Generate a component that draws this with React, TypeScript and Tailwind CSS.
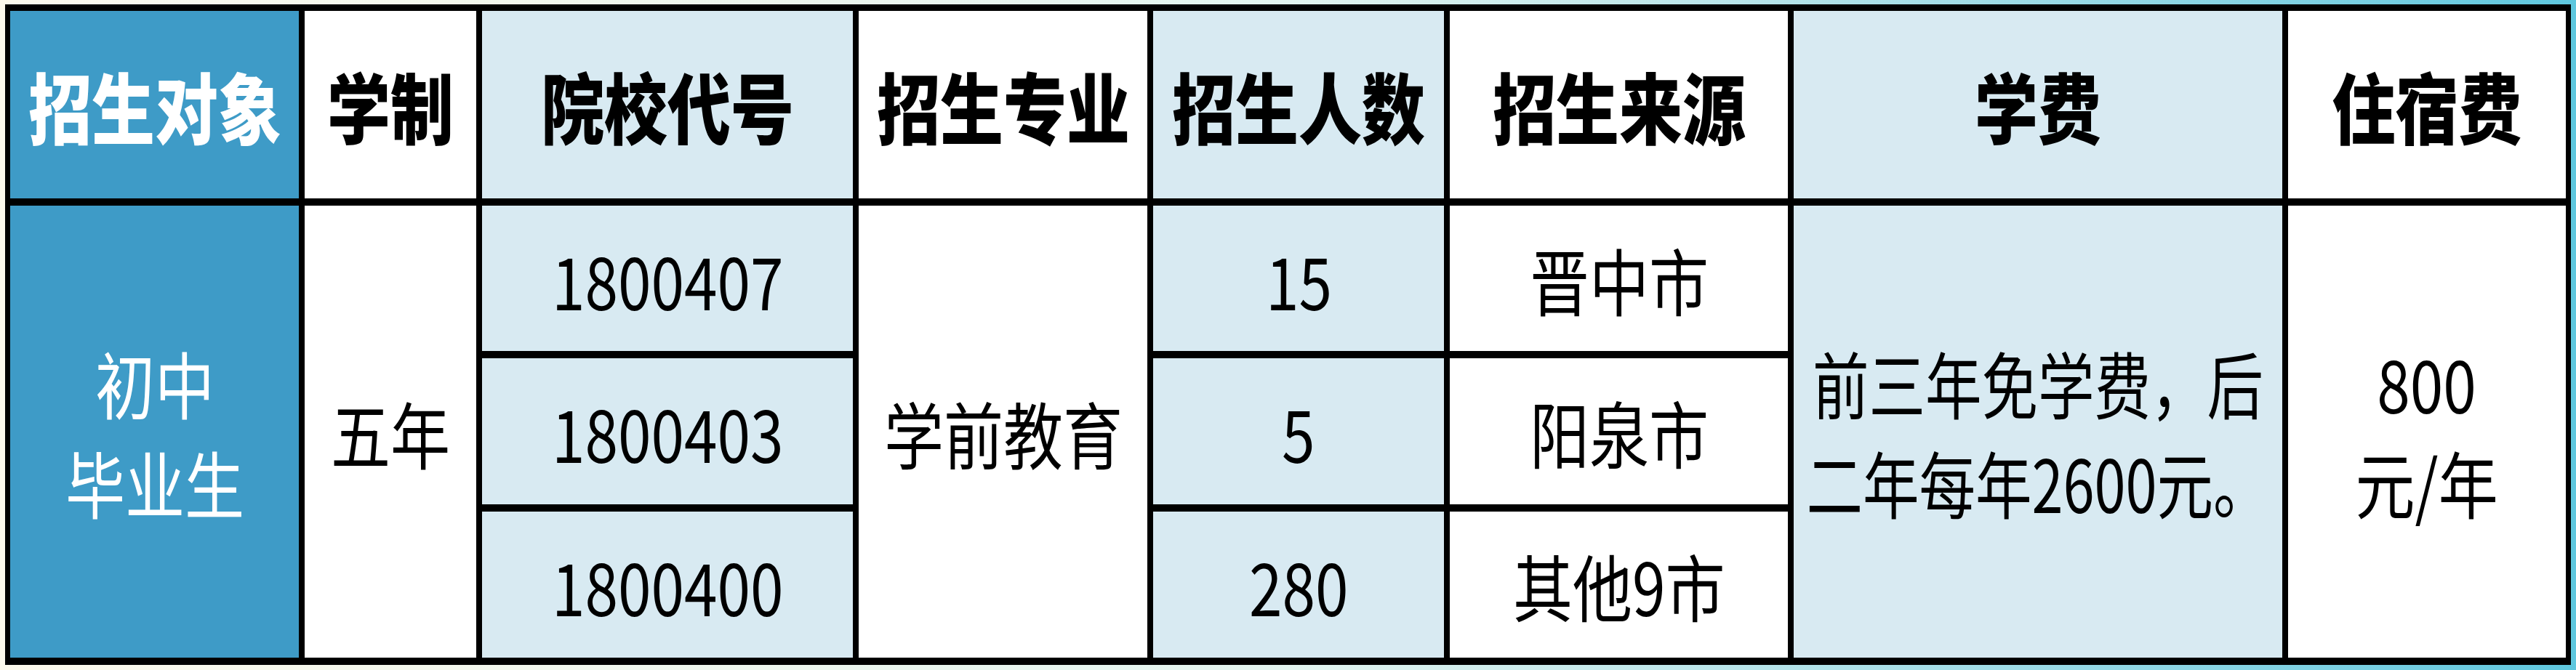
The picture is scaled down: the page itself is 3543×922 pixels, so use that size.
import React from 'react';

const font = "font-['Noto_Sans_CJK_SC','Noto_Sans',sans-serif]";

const BLUE = 'bg-[#3e9bc7] text-white';
const PALE = 'bg-[#d8eaf2] text-black';
const WHITE = 'bg-white text-black';

const headers: { label: string; tone: string }[] = [
  { label: '招生对象', tone: BLUE },
  { label: '学制', tone: WHITE },
  { label: '院校代号', tone: PALE },
  { label: '招生专业', tone: WHITE },
  { label: '招生人数', tone: PALE },
  { label: '招生来源', tone: WHITE },
  { label: '学费', tone: PALE },
  { label: '住宿费', tone: WHITE },
];

const rows = [
  { code: '1800407', count: '15', from: '晋中市' },
  { code: '1800403', count: '5', from: '阳泉市' },
  { code: '1800400', count: '280', from: '其他9市' },
];

const Cell: React.FC<{ tone: string; span?: boolean; children: React.ReactNode }> = ({ tone, span, children }) => (
  <div className={`${tone} ${span ? 'row-span-3' : ''} flex items-center justify-center`}>{children}</div>
);

const Text: React.FC<{ lines: string[]; bold?: boolean; narrow?: boolean }> = ({ lines, bold, narrow }) => (
  <div
    className={`whitespace-nowrap text-center ${narrow ? 'scale-x-[0.775]' : 'scale-x-[0.82]'} ${
      bold ? 'text-[106px] font-black leading-none' : 'text-[100px] font-normal leading-[137px]'
    }`}
  >
    {lines.map((l, i) => (
      <div key={i}>{l}</div>
    ))}
  </div>
);

const App: React.FC = () => {
  return (
    <div className={`w-[3543px] h-[922px] bg-linear-to-r from-[#fcf9ec] via-[#e2f4ef] to-[#5ec7de] pt-[6px] pl-[7px] ${font}`}>
      <div className="w-[3529px] bg-black pt-[9px] pb-[10px] px-[7px]">
        <div className="grid grid-cols-[397px_236px_510px_397px_400px_465px_672px_382px] grid-rows-[258px_200px_201px_201px] gap-x-[8px] gap-y-[10px]">
          {headers.map((h) => (
            <Cell key={h.label} tone={h.tone}>
              <Text lines={[h.label]} bold />
            </Cell>
          ))}

          <Cell tone={BLUE} span>
            <Text lines={['初中', '毕业生']} />
          </Cell>
          <Cell tone={WHITE} span>
            <Text lines={['五年']} />
          </Cell>
          <Cell tone={PALE}>
            <Text lines={[rows[0].code]} />
          </Cell>
          <Cell tone={WHITE} span>
            <Text lines={['学前教育']} />
          </Cell>
          <Cell tone={PALE}>
            <Text lines={[rows[0].count]} />
          </Cell>
          <Cell tone={WHITE}>
            <Text lines={[rows[0].from]} />
          </Cell>
          <Cell tone={PALE} span>
            <Text lines={['前三年免学费，后', '二年每年2600元。']} narrow />
          </Cell>
          <Cell tone={WHITE} span>
            <Text lines={['800', '元/年']} />
          </Cell>

          {rows.slice(1).map((r) => (
            <React.Fragment key={r.code}>
              <Cell tone={PALE}>
                <Text lines={[r.code]} />
              </Cell>
              <Cell tone={PALE}>
                <Text lines={[r.count]} />
              </Cell>
              <Cell tone={WHITE}>
                <Text lines={[r.from]} />
              </Cell>
            </React.Fragment>
          ))}
        </div>
      </div>
    </div>
  );
};

export default App;
